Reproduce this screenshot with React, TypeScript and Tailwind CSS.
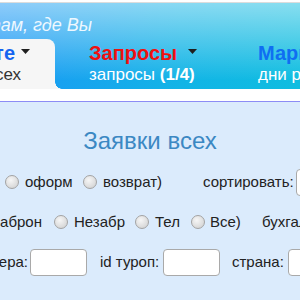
import React from 'react';

const Radio: React.FC<{ className?: string }> = ({ className = '' }) => (
  <span
    className={`inline-block w-[14px] h-[14px] shrink-0 rounded-full border border-[#a3a3a3] bg-[radial-gradient(circle_at_40%_35%,#f6f6f6,#cdcdcd)] ${className}`}
  />
);

const Field: React.FC<{ className?: string }> = ({ className = '' }) => (
  <span className={`inline-block w-[57px] h-[27px] shrink-0 rounded-[4px] border border-[#a9a9a9] bg-white ${className}`} />
);

// right-aligned box: text that runs past the left edge of the page is cut off
const Clip: React.FC<{ w: string; children: React.ReactNode; className?: string }> = ({ w, children, className = '' }) => (
  <span className={`flex shrink-0 justify-end overflow-hidden whitespace-nowrap ${w} ${className}`}>{children}</span>
);

const Caret: React.FC<{ className?: string }> = ({ className = '' }) => (
  <svg width="9" height="5" viewBox="0 0 9 5" className={`shrink-0 ${className}`}>
    <polygon points="0,0 9,0 4.5,5" fill="#1f1f1f" />
  </svg>
);

export default function App() {
  return (
    <div className="w-[300px] h-[300px] overflow-hidden bg-white whitespace-nowrap font-['Liberation_Sans',Arial,sans-serif] text-[#222]">
      {/* Header */}
      <div className="h-[2px] bg-white" />
      <div className="border-t border-[#dcdcdc] h-[87px] bg-[linear-gradient(to_bottom,rgba(255,255,255,0.5),rgba(255,255,255,0)_90%),linear-gradient(to_right,#1b98f5,#12b4e6_60%,#0fbde0)]">
        <div className="h-[36px] pt-[12px]">
          <Clip w="w-[92px]" className="italic text-[18px] leading-[20px] text-[#eef8ff]">
            Отдыхайте там, где Вы
          </Clip>
        </div>

        <div className="flex h-[50px]">
          {/* active tab */}
          <div className="relative w-[55px] shrink-0 bg-[#f6f6f6] rounded-tr-[8px] pt-[2px]">
            <div className="flex items-center h-[24px]">
              <Clip w="w-[15px]" className="font-bold text-[20px] text-[#1565f0]">
                На сайте
              </Clip>
              <Caret className="ml-[6px] -translate-y-[2px]" />
            </div>
            <div className="h-[20px] leading-[20px] text-[17px] text-[#333]">
              <Clip w="w-[21px]">заявки всех</Clip>
            </div>
            <span className="absolute left-[55px] bottom-0 w-[7px] h-[7px] bg-[radial-gradient(circle_at_100%_0,transparent_6.5px,#f6f6f6_7px)]" />
          </div>

          {/* second tab */}
          <div className="w-[150px] shrink-0 pl-[34px] pr-[8px] pt-[2px]">
            <div className="flex items-center justify-between h-[24px]">
              <span className="font-bold text-[20px] text-[#f01010]">Запросы</span>
              <Caret className="-translate-y-[2px]" />
            </div>
            <div className="h-[20px] leading-[20px] text-[17px] text-white">
              запросы <span className="font-bold">(1/4)</span>
            </div>
          </div>

          {/* third tab */}
          <div className="shrink-0 pl-[53px] pt-[2px]">
            <div className="flex items-center h-[24px]">
              <span className="font-bold text-[20px] text-[#0f6ef2]">Маршруты</span>
            </div>
            <div className="h-[20px] leading-[20px] text-[17px] text-white">дни рождения</div>
          </div>
        </div>
      </div>

      <div className="h-[12px] bg-white" />

      {/* Panel */}
      <div className="border-t border-[#8c8cf5] bg-[#dbebfc] h-[200px] text-[15px]">
        <div className="mt-[23px] mb-[5px] h-[32px] leading-[32px] text-center text-[24px] text-[#3b88c3]">
          Заявки всех
        </div>

        <div className="flex items-center h-[40px]">
          <Radio className="ml-[5px]" />
          <span className="ml-[6px] w-[58px] shrink-0">оформ</span>
          <Radio />
          <span className="ml-[6px] w-[100px] shrink-0">возврат)</span>
          <span className="w-[93px] shrink-0">сортировать:</span>
          <Field />
        </div>

        <div className="flex items-center h-[40px]">
          <Clip w="w-[42px]">Заброн</Clip>
          <Radio className="ml-[12px]" />
          <span className="ml-[6px] w-[61px] shrink-0">Незабр</span>
          <Radio />
          <span className="ml-[6px] w-[36px] shrink-0">Тел</span>
          <Radio />
          <span className="ml-[5px] w-[52px] shrink-0">Все)</span>
          <span className="shrink-0">бухгалтерия</span>
        </div>

        <div className="flex items-center h-[40px]">
          <Clip w="w-[28px]">менеджера:</Clip>
          <Field className="ml-[2px]" />
          <span className="ml-[13px] w-[63px] shrink-0">id туроп:</span>
          <Field />
          <span className="ml-[12px] w-[56px] shrink-0">страна:</span>
          <Field />
        </div>
      </div>
    </div>
  );
}
